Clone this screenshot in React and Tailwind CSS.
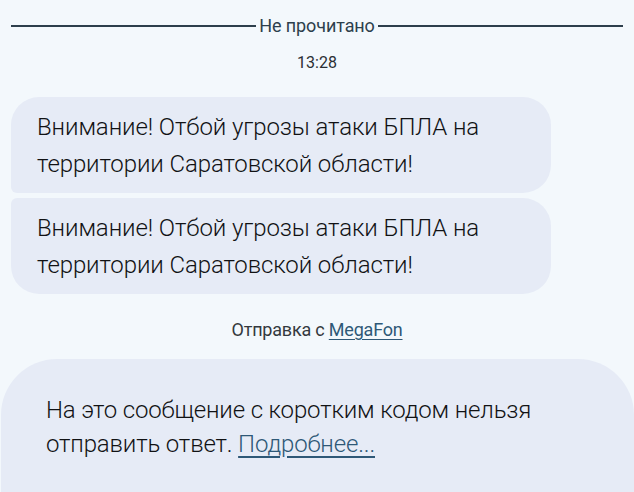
import React from "react";

const Bubble = ({ shape, children }) => (
  <div
    className={`w-[540px] bg-[#e6ebf6] pl-[26px] pr-4 pt-[12px] pb-[10px] text-[24px] font-light leading-[37px] tracking-[-0.1px] text-[#111214] ${shape}`}
  >
    {children}
  </div>
);

export default function App() {
  return (
    <div className="h-[492px] w-[634px] overflow-hidden bg-[#f3f8fc] font-['Roboto',sans-serif]">
      <div className="flex items-center px-[11px] pt-[15px]">
        <div className="h-[2px] flex-1 bg-[#2d3f4c]" />
        <span className="px-[3px] text-[18px] leading-[22px] tracking-[-0.1px] text-[#2d3f4c]">Не прочитано</span>
        <div className="h-[2px] flex-1 bg-[#2d3f4c]" />
      </div>
      <div className="mt-[16px] text-center text-[16px] leading-[20px] text-[#2a2f33]">13:28</div>

      <div className="mt-[24px] flex flex-col gap-[5px] pl-[11px]">
        <Bubble shape="rounded-[28px] rounded-bl-[6px]">
          Внимание! Отбой угрозы атаки БПЛА на
          <br />
          территории Саратовской области!
        </Bubble>
        <Bubble shape="rounded-[28px] rounded-tl-[6px]">
          Внимание! Отбой угрозы атаки БПЛА на
          <br />
          территории Саратовской области!
        </Bubble>
      </div>

      <div className="mt-[25px] text-center text-[18px] leading-[22px] tracking-[-0.2px] text-[#33393e]">
        Отправка с{" "}
        <span className="text-[#2e5877] underline underline-offset-[3px]">MegaFon</span>
      </div>

      <div className="mt-[18px] ml-[1px] h-[200px] rounded-t-[56px] bg-[#e6ebf6] pl-[45px] pt-[34px] text-[24px] font-light leading-[34px] tracking-[-0.15px] text-[#111214]">
        На это сообщение с коротким кодом нельзя
        <br />
        отправить ответ.{" "}
        <span className="text-[#2e5877] underline underline-offset-[4px]">Подробнее...</span>
      </div>
    </div>
  );
}
